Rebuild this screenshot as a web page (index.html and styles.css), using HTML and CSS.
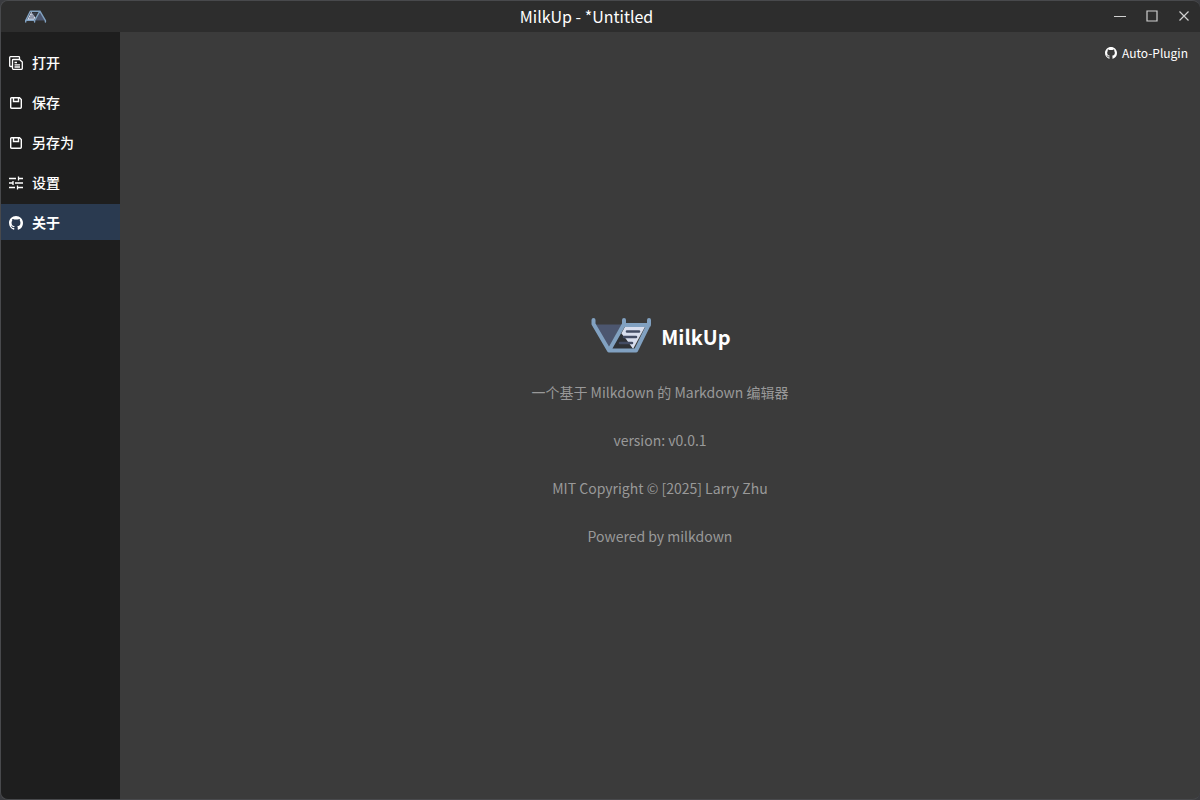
FILE: index.html
```html
<!DOCTYPE html>
<html lang="zh-CN">
<head>
<meta charset="utf-8">
<title>MilkUp - *Untitled</title>
<link rel="stylesheet" href="styles.css">
</head>
<body>
<svg class="symbols" aria-hidden="true">
  <symbol id="logo" viewBox="-1 1 62 38">
    <path d="M5 7.500H32L18 31Z" fill="#4c566f"/>
    <path d="M36 8H56L43 32L31 17Z" fill="#d8deee"/>
    <path d="M31 16L36 22L43 32H20Z" fill="#2e3136"/>
    <path d="M37 14.500H49M34 20H46M30 26H42" fill="none" stroke="#434c64" stroke-width="2.600" stroke-linecap="round"/>
    <path d="M3.500 3V7L19 33.500H46L59 7V3M34 3V7L19 33.500M34 8H59" fill="none" stroke="#81a1c1" stroke-width="4" stroke-linecap="round" stroke-linejoin="round"/>
  </symbol>
  <symbol id="github" viewBox="0 0 16 16">
    <path fill="currentColor" d="M8 0C3.580 0 0 3.580 0 8c0 3.540 2.290 6.530 5.470 7.590.4.070.55-.17.55-.38 0-.19-.01-.82-.01-1.490-2.010.37-2.530-.49-2.690-.94-.09-.23-.48-.94-.82-1.130-.28-.15-.68-.52-.01-.53.63-.01 1.080.58 1.230.82.72 1.210 1.870.87 2.330.66.07-.52.28-.87.51-1.070-1.780-.2-3.640-.89-3.640-3.950 0-.87.31-1.590.82-2.150-.08-.2-.36-1.020.08-2.120 0 0 .67-.21 2.200.82A7.600 7.600 0 0 1 8 3.870c.68 0 1.360.09 2 .27 1.530-1.040 2.200-.82 2.200-.82.44 1.100.16 1.920.08 2.120.51.56.82 1.270.82 2.150 0 3.070-1.870 3.750-3.650 3.950.29.25.54.73.54 1.480 0 1.070-.01 1.930-.01 2.200 0 .21.15.46.55.38A8.010 8.010 0 0 0 16 8c0-4.420-3.580-8-8-8Z"/>
  </symbol>
  <symbol id="save" viewBox="0 0 14 14">
    <path d="M2.500 1.700H10.500L12.300 3.500V11.300Q12.300 12.300 11.300 12.300H2.700Q1.700 12.300 1.700 11.300V2.500Q1.700 1.700 2.500 1.700ZM4.500 1.700V5.500H9.500V1.700" fill="none" stroke="currentColor" stroke-width="1.400"/>
  </symbol>
</svg>
<div class="window">
  <header class="titlebar">
    <svg class="app-mark"><use href="#logo"/></svg>
    <h1 class="caption">MilkUp - *Untitled</h1>
    <div class="controls">
      <button type="button" aria-label="最小化"><svg viewBox="0 0 12 12"><path d="M0 6.500H12"/></svg></button>
      <button type="button" aria-label="最大化"><svg viewBox="0 0 12 12"><path d="M1 1H11V11H1Z"/></svg></button>
      <button type="button" aria-label="关闭"><svg viewBox="0 0 12 12"><path d="M1.500 1.500L10.500 10.500M10.500 1.500L1.500 10.500"/></svg></button>
    </div>
  </header>
  <div class="body">
    <nav class="menu">
      <button type="button"><svg viewBox="0 0 14 14"><path d="M3.500 10.500H1.500Q.7 10.500.7 9.700V1.500Q.7.700 1.500.700H9.700Q10.500.7 10.500 1.500V3.300M4.300 3.500H10.500L13.300 6V12.500Q13.300 13.300 12.500 13.300H4.300Q3.500 13.300 3.500 12.500V4.300Q3.500 3.500 4.300 3.500M5.500 6.500H8M5.500 8.800H11M5.500 11H11" fill="none" stroke="currentColor" stroke-width="1.300"/></svg>打开</button>
      <button type="button"><svg><use href="#save"/></svg>保存</button>
      <button type="button"><svg><use href="#save"/></svg>另存为</button>
      <button type="button"><svg viewBox="0 0 14 14"><path d="M0 2.500H7M9 2.500H14M9.500.5V4.500M0 7H3.500M4 5V9M6 7H14M0 11.500H6M8.500 11.500H14M8.500 9.500V13.500" fill="none" stroke="currentColor" stroke-width="1.300"/></svg>设置</button>
      <button type="button" class="active" aria-current="page"><svg><use href="#github"/></svg>关于</button>
    </nav>
    <main class="about">
      <a class="plugin" href="#plugin"><svg><use href="#github"/></svg>Auto-Plugin</a>
      <h2 class="brand"><svg><use href="#logo"/></svg>MilkUp</h2>
      <p>一个基于 Milkdown 的 Markdown 编辑器</p>
      <p>version: v0.0.1</p>
      <p>MIT Copyright © [2025] Larry Zhu</p>
      <p>Powered by milkdown</p>
    </main>
  </div>
</div>
</body>
</html>
```
FILE: styles.css
```css
* { box-sizing: border-box; }

body {
  margin: 0;
  background: #3a3b3f;
  color: #fff;
  font-family: "Noto Sans CJK SC", "Noto Sans", sans-serif;
  font-size: 14px;
}

button { border: 0; background: none; color: inherit; font: inherit; }
.symbols { position: absolute; width: 0; height: 0; }

.window {
  display: flex;
  flex-direction: column;
  height: 100vh;
  border: 1px solid #48494c;
  border-right: 0;
  border-radius: 8px;
  overflow: hidden;
  background: #3b3b3b;
}

.titlebar {
  display: flex;
  align-items: center;
  justify-content: space-between;
  height: 31px;
  padding-bottom: 2px;
  background: #2d2d2d;
}

.app-mark { width: 22px; height: 14px; margin: 0 22px 0 24px; transform: rotate(180deg); }
.caption { margin: 0; font-size: 16px; font-weight: 400; line-height: 24px; }
.controls { display: flex; }

.controls button {
  display: flex;
  align-items: center;
  justify-content: center;
  width: 32px;
  height: 29px;
  padding: 0;
}

.controls svg { width: 12px; height: 12px; fill: none; stroke: #d0d0d0; stroke-width: 1.2; }

.body { display: flex; flex: 1; }

.menu {
  display: flex;
  flex-direction: column;
  gap: 4px;
  width: 119px;
  padding-top: 12px;
  background: #1e1e1e;
}

.menu button {
  display: flex;
  align-items: center;
  gap: 9px;
  height: 36px;
  padding: 0 8px;
  font-weight: 500;
}

.menu svg { width: 14px; height: 16px; padding-top: 2px; }
.menu .active { background: #2a3a50; font-weight: 700; }

.about {
  position: relative;
  display: flex;
  flex: 1;
  flex-direction: column;
  align-items: center;
  justify-content: center;
  gap: 24px;
  padding-top: 34px;
}

.plugin {
  position: absolute;
  top: 12px;
  right: 12px;
  display: flex;
  align-items: center;
  gap: 5px;
  color: #fff;
  font-size: 12px;
  line-height: 18px;
  text-decoration: none;
}

.plugin svg { width: 12px; height: 12px; }

.brand {
  display: flex;
  align-items: center;
  gap: 10px;
  margin: 0;
  font-size: 20px;
  line-height: 36px;
}

.brand svg { width: 62px; height: 38px; }
.about p { margin: 0; color: #999; line-height: 24px; }
```
